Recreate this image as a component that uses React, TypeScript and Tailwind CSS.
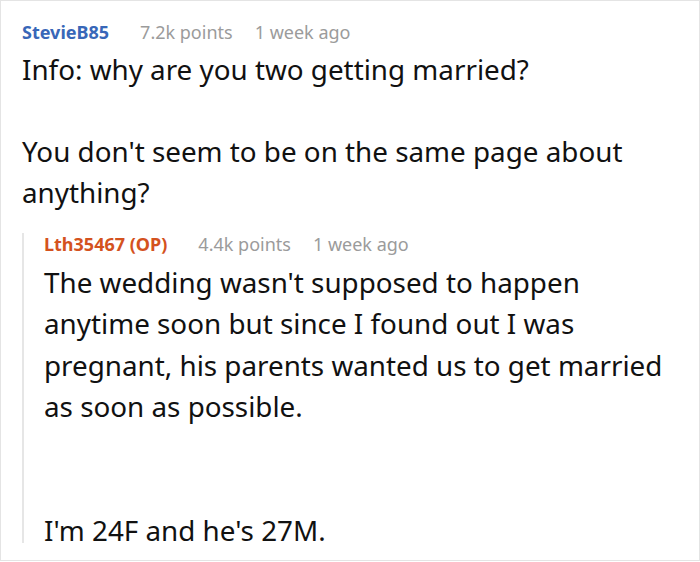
export default function App() {
  return (
    <div className="h-[562px] w-[700px] overflow-hidden bg-white font-['Noto_Sans',sans-serif]">
      <div className="h-[561px] border border-[#e4e4e4] pl-[21px] pr-4 pt-[20px] text-[#111]">
        <CommentHeader
          user="StevieB85"
          userClass="text-[#3867b8]"
          points="7.2k points"
          time="1 week ago"
        />
        <div className="mt-[6px] text-[27.8px] leading-[41px]">
          <p>Info: why are you two getting married?</p>
          <p className="mt-[41px]">
            You don't seem to be on the same page about
            <br />
            anything?
          </p>
        </div>

        <div className="mt-[28px] h-[310px] border-l-2 border-[#e6e6e6] pl-[20px]">
          <div className="-mt-[8px]">
            <CommentHeader
              user="Lth35467 (OP)"
              userClass="text-[#d4521e]"
              points="4.4k points"
              time="1 week ago"
            />
          </div>
          <div className="mt-[7px] text-[27.8px] leading-[41.3px]">
            <p>
              The wedding wasn't supposed to happen
              <br />
              anytime soon but since I found out I was
              <br />
              pregnant, his parents wanted us to get married
              <br />
              as soon as possible.
            </p>
            <p className="mt-[83px]">I'm 24F and he's 27M.</p>
          </div>
        </div>
      </div>
    </div>
  );
}

function CommentHeader({
  user,
  userClass,
  points,
  time,
}: {
  user: string;
  userClass: string;
  points: string;
  time: string;
}) {
  return (
    <div className="flex items-center text-[18px] leading-[22px]">
      <span className={`font-bold ${userClass}`}>{user}</span>
      <span className="ml-[31px] text-[#9b9b9b]">{points}</span>
      <span className="ml-[22px] text-[#9b9b9b]">{time}</span>
    </div>
  );
}
